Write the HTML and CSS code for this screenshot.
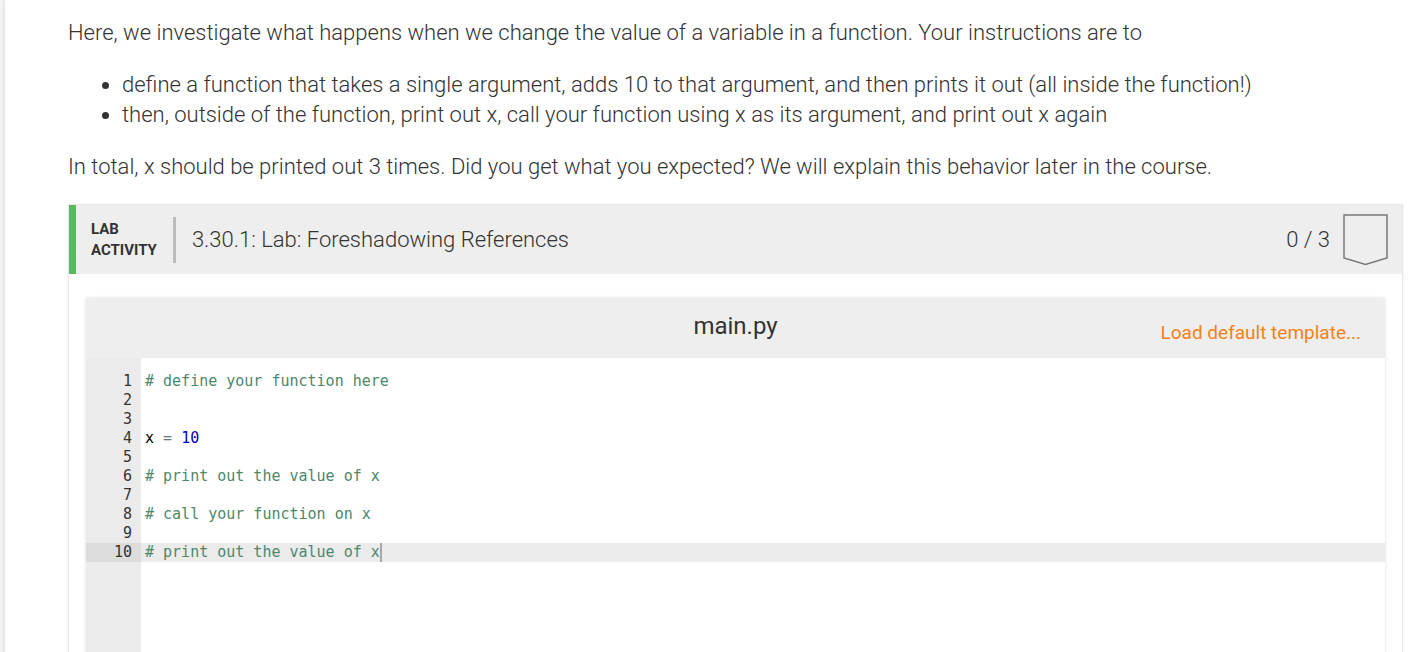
FILE: index.html
```html
<!DOCTYPE html>
<html>
<head>
<meta charset="utf-8">
<link rel="stylesheet" href="styles.css">
</head>
<body>
<div class="page">
  <p class="text">Here, we investigate what happens when we change the value of a variable in a function. Your instructions are to</p>
  <ul class="list">
    <li>define a function that takes a single argument, adds 10 to that argument, and then prints it out (all inside the function!)</li>
    <li>then, outside of the function, print out x, call your function using x as its argument, and print out x again</li>
  </ul>
  <p class="text">In total, x should be printed out 3 times. Did you get what you expected? We will explain this behavior later in the course.</p>

  <div class="activity">
    <div class="act-header">
      <div class="act-label">LAB<br>ACTIVITY</div>
      <div class="act-divider"></div>
      <div class="act-title">3.30.1: Lab: Foreshadowing References</div>
      <div class="act-score">0 / 3</div>
      <svg class="act-shield" width="46" height="52" viewBox="0 0 46 52"><path d="M1 1 H44 V44 L22.5 50.5 L1 44 Z" fill="none" stroke="#787878" stroke-width="1.5"/></svg>
    </div>
    <div class="act-body">
      <div class="editor">
        <div class="ed-header">
          <span></span>
          <span class="ed-file">main.py</span>
          <span class="ed-load">Load default template...</span>
        </div>
        <div class="ed-code">
          <div class="gutter">
            <div class="gl">1</div><div class="gl">2</div><div class="gl">3</div><div class="gl">4</div><div class="gl">5</div><div class="gl">6</div><div class="gl">7</div><div class="gl">8</div><div class="gl">9</div><div class="gl active">10</div>
          </div>
          <div class="lines">
            <div class="cl"><span class="cm"># define your function here</span></div>
            <div class="cl"></div>
            <div class="cl"></div>
            <div class="cl">x <span class="op">=</span> <span class="num">10</span></div>
            <div class="cl"></div>
            <div class="cl"><span class="cm"># print out the value of x</span></div>
            <div class="cl"></div>
            <div class="cl"><span class="cm"># call your function on x</span></div>
            <div class="cl"></div>
            <div class="cl active"><span class="cm"># print out the value of x</span><span class="cursor"></span></div>
          </div>
        </div>
      </div>
    </div>
  </div>
</div>
</body>
</html>
```

FILE: styles.css
```css
html, body {
  margin: 0;
  padding: 0;
  background: #f3f3f3;
  overflow: hidden;
}
.page {
  margin-left: 5px;
  background: #fff;
  min-height: 652px;
  padding: 18px 24px 0 63px;
  box-shadow: 0 0 4px rgba(0,0,0,0.12);
  font-family: Roboto, "Liberation Sans", sans-serif;
  color: #333;
}
.text {
  margin: 0 0 22px;
  font-size: 22px;
  font-weight: 300;
  line-height: 30px;
}
.list {
  margin: 0 0 22px;
  padding-left: 54px;
  font-size: 22px;
  font-weight: 300;
  line-height: 30px;
}
.activity {
  margin-top: 22px;
  border: 1px solid #e8e8e8;
  box-shadow: 0 1px 3px rgba(0,0,0,0.08);
  background: #fff;
}
.act-header {
  display: flex;
  align-items: center;
  height: 69px;
  background: #eee;
  border-left: 7px solid #5cb85c;
  padding: 0 13px 0 15px;
}
.act-label {
  font-size: 15px;
  font-weight: 700;
  line-height: 21px;
  color: #333;
  margin-top: 1px;
}
.act-divider {
  width: 3px;
  height: 46px;
  background: #bcbcbc;
  margin-left: 16px;
}
.act-title {
  margin-left: 16px;
  font-size: 22px;
  font-weight: 300;
  flex: 1;
}
.act-score {
  font-size: 22px;
  font-weight: 300;
}
.act-shield {
  margin-left: 13px;
  display: block;
  margin-top: 1px;
}
.act-body {
  padding: 24px 17px 0;
}
.editor {
  background: #fff;
  box-shadow: 0 0 3px rgba(0,0,0,0.15);
}
.ed-header {
  display: grid;
  grid-template-columns: 1fr auto 1fr;
  align-items: center;
  height: 60px;
  background: #eee;
}
.ed-file {
  font-size: 24px;
  font-weight: 400;
  color: #333;
  margin-bottom: 4px;
}
.ed-load {
  justify-self: end;
  padding-right: 24px;
  margin-top: 8px;
  font-size: 19px;
  color: #f7801a;
}
.ed-code {
  display: flex;
  min-height: 400px;
  font-family: "DejaVu Sans Mono", "Liberation Mono", monospace;
  font-size: 15px;
  line-height: 19px;
}
.gutter {
  width: 55px;
  background: #ebebeb;
  padding-top: 14px;
  color: #333;
}
.gl {
  height: 19px;
  text-align: right;
  padding-right: 9px;
}
.gl.active {
  background: #dcdcdc;
}
.lines {
  flex: 1;
  padding-top: 14px;
  color: #000;
}
.cl {
  height: 19px;
  padding-left: 4px;
  white-space: pre;
}
.cl.active {
  background: #ebebeb;
}
.cm { color: #4c886b; }
.op { color: #687687; }
.num { color: #0000cd; }
.cursor {
  display: inline-block;
  width: 2px;
  height: 19px;
  background: #a8a8a8;
  vertical-align: top;
}
```
